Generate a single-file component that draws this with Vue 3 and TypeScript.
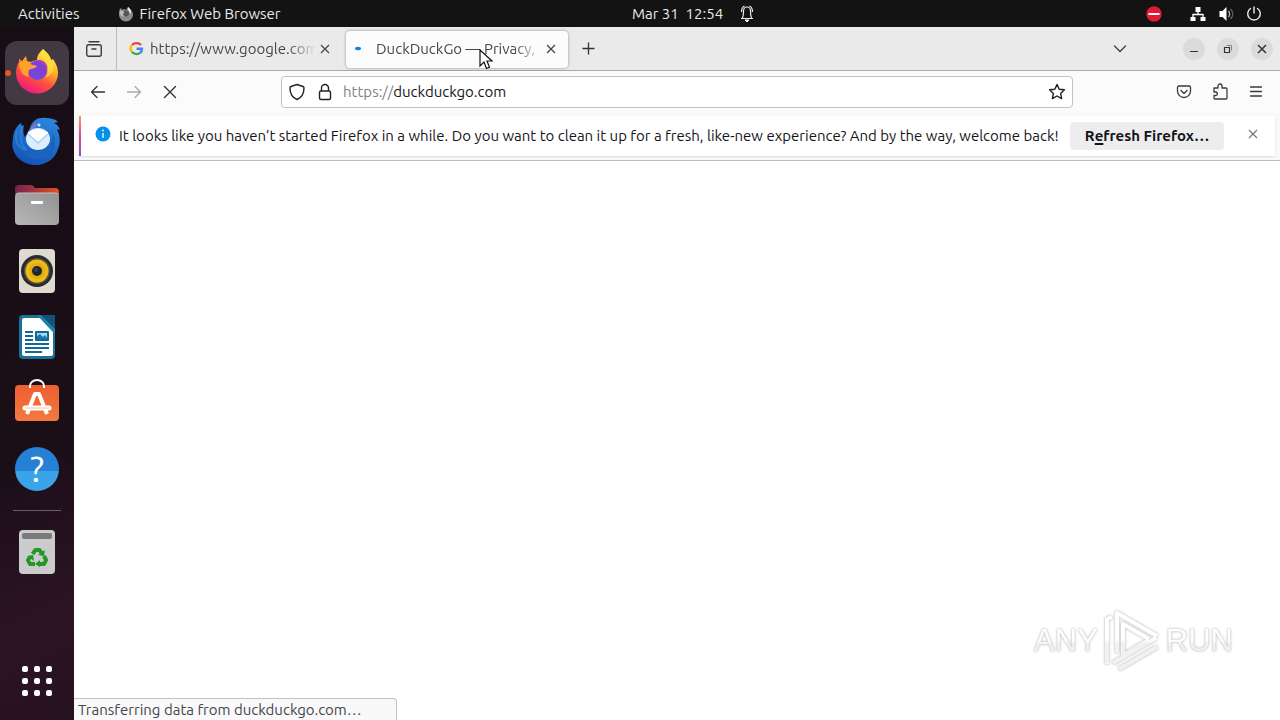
<script setup lang="ts">
import { ref } from 'vue'

interface Tab {
  id: number
  title: string
  loading: boolean
}

const tabs: Tab[] = [
  { id: 1, title: 'https://www.google.com', loading: false },
  { id: 2, title: 'DuckDuckGo — Privacy,', loading: true },
]
const activeTab = ref(2)
const address = ref('https://duckduckgo.com')
</script>

<template>
  <div class="desktop">
    <header class="topbar">
      <div class="top-left">
        <button class="top-btn">Activities</button>
        <button class="top-btn app-menu">
          <svg width="16" height="16" viewBox="0 0 16 16" aria-hidden="true">
            <path d="M1 4l2-2 1 2 2-1 2 1 2-3c1 1 2 2 3 3 1 1 2 3 2 5a7 6.500 0 0 1-14 0c0-2 0-3 1-5z" fill="#8c8c8c" />
            <circle cx="8" cy="7.500" r="3" fill="#555" />
            <path d="M10 1c-1 3 2 4 2 7 2-2 1-5-2-7z" fill="#eee" />
            <path d="M1.500 5c2-1 3 0 5 1.500-2 .5-2 3 0 4-3 .5-5-2-5-5.500z" fill="#bbb" />
          </svg>
          <span>Firefox Web Browser</span>
        </button>
      </div>
      <button class="top-btn clock">
        <span>Mar 31&nbsp; 12:54</span>
        <svg width="16" height="18" viewBox="0 0 16 18" fill="none" stroke="#eee" aria-hidden="true">
          <path d="M2 13.500h12M3.500 13c1-2 1-4 1-7a3.500 4 0 0 1 7 0c0 3 0 5 1 7M2.500 7c0-3 1-5 3-6M13.500 7c0-3-1-5-3-6" stroke-width="1.200" />
          <path d="M6 15h4l-2 2z" fill="#eee" />
        </svg>
      </button>
      <div class="tray">
        <svg width="16" height="16" viewBox="0 0 16 16" aria-hidden="true">
          <circle cx="8" cy="8" r="7.700" fill="#e01b36" /><path d="M2.500 8h11" stroke="#fff" stroke-width="2" />
        </svg>
        <button class="tray-menu" aria-label="System menu">
          <svg width="16" height="16" viewBox="0 0 16 16" aria-hidden="true">
            <path d="M8 4v4M3 12V8.500h10V12" fill="none" stroke="#fff" stroke-width="1.300" />
            <path d="M5.500 1h5v5h-5zM.5 11h5v4h-5zM10.500 11h5v4h-5z" fill="#fff" />
          </svg>
          <svg width="16" height="16" viewBox="0 0 16 16" aria-hidden="true">
            <path d="M1.500 5h3l4-4v14l-4-4h-3z" fill="#fff" />
            <path d="M10.500 5c1.500 2 1.500 4 0 6" fill="none" stroke="#bbb" stroke-width="1.300" />
            <path d="M12.500 3c3 3 3 7 0 10" fill="none" stroke="#666" stroke-width="1.300" />
          </svg>
          <svg width="16" height="16" viewBox="0 0 16 16" fill="none" stroke="#eee" stroke-width="1.400" stroke-linecap="round" aria-hidden="true">
            <path d="M8 1v6M4.500 2.500a6.300 6.300 0 1 0 7 0" />
          </svg>
        </button>
      </div>
    </header>

    <div class="workspace">
      <nav class="dock" aria-label="Dock">
        <button class="dock-item running" aria-label="Firefox">
          <svg width="48" height="48" viewBox="0 0 48 48" aria-hidden="true">
            <defs>
              <linearGradient id="fx" x1=".8" y1=".05" x2=".3" y2="1">
                <stop offset="0" stop-color="#fff04a" /><stop offset=".35" stop-color="#ffb02a" />
                <stop offset=".65" stop-color="#ff4f3e" /><stop offset="1" stop-color="#ee1584" />
              </linearGradient>
              <linearGradient id="fxglobe" x1="1" y1="0" x2="0" y2="1"><stop offset="0" stop-color="#8a3ad0" /><stop offset="1" stop-color="#6c4be0" /></linearGradient>
            </defs>
            <path d="M30 0c3 3 7 5 8 11l2-1c3 4 5 9 5 14a21 20.500 0 0 1-42 0c0-4 1-8 3-11l0-3 3 2 4-5 1 5 4 1c2-1 4-2 6-2 0-5 3-8 6-11z" fill="url(#fx)" />
            <path d="M15 22c0-6 4-11 11-11 5 0 8 4 8 10a9.500 9.500 0 0 1-19 1z" fill="url(#fxglobe)" />
            <path d="M22 12c7-2 12 1 13 7-2-2-3-3-5-3-2-3-5-4-8-4z" fill="#b03fb4" opacity=".8" />
            <path d="M6 14c4-3 9-2 11 1 2 1 5 1 7 2-1 3-6 2-8 4-1 2-1 5 0 7-6-1-10-6-10-14z" fill="#ffa12c" />
            <path d="M30 0c-4 7 0 10 3 14 3 5 3 10-1 15 9-4 11-12 6-18-1-4-4-7-8-11z" fill="#ffe040" opacity=".75" />
          </svg>
        </button>
        <button class="dock-item" aria-label="Thunderbird">
          <svg width="52" height="52" viewBox="0 0 52 52" aria-hidden="true">
            <defs><linearGradient id="tb" x1=".7" y1="0" x2=".4" y2="1"><stop offset="0" stop-color="#2a85dd" /><stop offset="1" stop-color="#1454b7" /></linearGradient></defs>
            <path d="M19 15c2-8 9-11 16-10 5 0 9 1 12 4l-4 1c4 2 5 4 6 7l-3-1c3 7 4 13 1 20a23 21 0 0 1-45-10c0-6 3-13 8-16l1 3 2-1c-1 5-1 9 1 12z" fill="url(#tb)" />
            <path d="M11 13c-2 11-3 18 5 24-9-2-13-9-10-19" fill="none" stroke="#3388d8" stroke-width="2" opacity=".7" />
            <path d="M18 19c2-8 8-10 11-9-5 3-6 6-8 11z" fill="#7e70cd" />
            <ellipse cx="27" cy="26" rx="12" ry="11" fill="#dceefe" />
            <path d="M17 21l10 9 10-9v-2l-10-3-10 3z" fill="#fff" />
            <path d="M17 21l10 9 10-9" fill="none" stroke="#a9d1ef" stroke-width="1.500" />
            <circle cx="28" cy="12" r="1.500" fill="#bcecff" />
            <path d="M28 37c10 0 15-8 13-18 7 12 1 26-14 27-7 0-12-3-16-7 5 2 11 2 17-2z" fill="#1d62bd" />
          </svg>
        </button>
        <button class="dock-item" aria-label="Files">
          <svg width="48" height="48" viewBox="0 0 48 48" aria-hidden="true">
            <defs>
              <linearGradient id="folder" x1="0" y1="0" x2="1" y2="0"><stop offset="0" stop-color="#75214d" /><stop offset="1" stop-color="#e45023" /></linearGradient>
              <linearGradient id="folder-front" x1="1" y1="0" x2="0" y2="1"><stop offset="0" stop-color="#929292" /><stop offset="1" stop-color="#b8b8b8" /></linearGradient>
            </defs>
            <path d="M2 8q0-4 4-4h12q2 0 4 3h20q4 0 4 4v15H2z" fill="url(#folder)" />
            <rect x="2" y="12" width="44" height="32" rx="4" fill="url(#folder-front)" />
            <path d="M3 13q1-1 3-1h36q2 0 3 1" fill="none" stroke="#c2c2c2" />
            <rect x="18" y="20" width="12" height="3" rx="1" fill="#fff" />
          </svg>
        </button>
        <button class="dock-item" aria-label="Rhythmbox">
          <svg width="48" height="48" viewBox="0 0 48 48" aria-hidden="true">
            <rect x="6" y="2" width="36" height="44" rx="4" fill="#dfdad0" />
            <circle cx="24" cy="24" r="16" fill="#292b2d" /><circle cx="24" cy="24" r="13" fill="#54524a" />
            <circle cx="24" cy="24" r="11.500" fill="#f0bb13" /><circle cx="24" cy="24" r="8" fill="#e3ad12" />
            <circle cx="24" cy="24" r="5" fill="#1f252b" /><circle cx="23" cy="23" r="2" fill="#36404b" />
          </svg>
        </button>
        <button class="dock-item" aria-label="LibreOffice Writer">
          <svg width="48" height="48" viewBox="0 0 48 48" aria-hidden="true">
            <path d="M6 6q0-4 4-4h18l14 14v26q0 4-4 4H10q-4 0-4-4z" fill="#1b7099" />
            <path d="M9 7q0-2 2-2h16l13 14v22q0 2-2 2H11q-2 0-2-2z" fill="#fff" />
            <path d="M28 2h14v14z" fill="#115378" /><path d="M28 2l14 14v5L24 2z" fill="#1e82ad" />
            <path d="M12 19h8M12 23h8M12 27h8M12 31h24M12 35h24M12 39h17" stroke="#116994" stroke-width="2" />
            <rect x="22" y="18" width="14" height="10" rx="1" fill="#116994" /><path d="M24 20h10v6H24z" fill="#a8ddf7" />
            <path d="M24 26v-3l3-2 3 3 2-2 2 3v1z" fill="#1679aa" />
          </svg>
        </button>
        <button class="dock-item" aria-label="Ubuntu Software">
          <svg width="48" height="48" viewBox="0 0 48 48" aria-hidden="true">
            <defs><linearGradient id="store" x1="0" y1="0" x2="0" y2="1"><stop offset="0" stop-color="#ee5f32" /><stop offset="1" stop-color="#f17941" /></linearGradient></defs>
            <rect x="2" y="6" width="44" height="36" rx="4" fill="url(#store)" />
            <path d="M17 9V7a7 6 0 0 1 14 0v2" fill="none" stroke="#fff" stroke-width="2" />
            <path d="M14 35l8-20h4l8 20" fill="none" stroke="#fff" stroke-width="4" stroke-linejoin="round" />
            <path d="M12 29h24" stroke="#fff" stroke-width="5" stroke-linecap="round" />
            <path d="M12 29h24" stroke="#f6c2ac" />
          </svg>
        </button>
        <button class="dock-item" aria-label="Help">
          <span class="help">?</span>
        </button>
        <hr class="dock-rule">
        <button class="dock-item" aria-label="Trash">
          <svg width="48" height="48" viewBox="0 0 48 48" aria-hidden="true">
            <rect x="6" y="2" width="36" height="44" rx="4" fill="#cbcbcb" /><rect x="9" y="5" width="30" height="6" rx="2" fill="#7b7b7b" />
            <g fill="none" stroke="#249629" stroke-width="4" stroke-linejoin="round">
              <path d="M19.500 26l3-4h4l2 3M31 28l2 4-2 4h-5M22 36h-5l-2-4 2-3" />
            </g>
            <path d="M25 27l6 1 1-6zM27 32v7l-5-3zM14 28l6-1 1 6z" fill="#249629" />
          </svg>
        </button>
        <button class="dock-item apps" aria-label="Show Applications">
          <svg width="32" height="32" viewBox="0 0 32 32" fill="#fff" aria-hidden="true">
            <template v-for="r in 3" :key="r">
              <rect v-for="c in 3" :key="c" :x="c * 12 - 11" :y="r * 12 - 11" width="6" height="6" rx="2" />
            </template>
          </svg>
        </button>
      </nav>

      <main class="window">
        <div class="tabstrip">
          <button class="view-btn" aria-label="Firefox View">
            <svg width="18" height="18" viewBox="0 0 18 18" fill="none" stroke="#3b3b40" stroke-width="1.400" stroke-linecap="round" aria-hidden="true">
              <rect x="1.700" y="4.700" width="14.600" height="11.600" rx="2" /><path d="M4 1.700h10M7 9h4" />
            </svg>
          </button>
          <div class="tabs">
            <div v-for="t in tabs" :key="t.id" class="tab" :class="{ active: t.id === activeTab }">
              <button class="tab-main" @click="activeTab = t.id">
                <svg v-if="t.loading" width="16" height="16" viewBox="0 0 16 16" aria-hidden="true"><ellipse cx="4" cy="7.500" rx="3" ry="1.800" fill="#0a84e0" /></svg>
                <svg v-else width="16" height="16" viewBox="0 0 16 16" fill="none" stroke-width="2.400" aria-hidden="true">
                  <path d="M13 4A6 5.500 0 0 0 4 4" stroke="#e94235" /><path d="M4 4a5.500 5.500 0 0 0 0 7" stroke="#fbbc05" />
                  <path d="M4 11a6 5.500 0 0 0 8 1" stroke="#34a853" /><path d="M12 12a5 5 0 0 0 2-4.300H8.500" stroke="#4285f4" />
                </svg>
                <span class="tab-title">{{ t.title }}</span>
              </button>
              <button class="tab-close" :aria-label="'Close ' + t.title">
                <svg width="10" height="10" viewBox="0 0 10 10" aria-hidden="true"><path d="M1 1l8 8M9 1L1 9" stroke="#444" stroke-width="1.200" /></svg>
              </button>
            </div>
          </div>
          <button class="new-tab" aria-label="New tab">
            <svg width="13" height="13" viewBox="0 0 13 13" aria-hidden="true"><path d="M6.500 .5v12M.5 6.500h12" stroke="#333" stroke-width="1.300" /></svg>
          </button>
          <button class="list-tabs" aria-label="List all tabs">
            <svg width="14" height="8" viewBox="0 0 14 8" fill="none" stroke="#444" stroke-width="1.400" stroke-linecap="round" stroke-linejoin="round" aria-hidden="true"><path d="M1.500 1L7 6.500 12.500 1" /></svg>
          </button>
          <div class="win-controls">
            <button aria-label="Minimize"><svg width="10" height="10" viewBox="0 0 10 10" aria-hidden="true"><path d="M1 7.500h8" stroke="#333" /></svg></button>
            <button aria-label="Restore"><svg width="10" height="10" viewBox="0 0 10 10" fill="none" stroke="#333" aria-hidden="true"><path d="M1.500 3.500h5v5h-5z" stroke-width="1.200" /><path d="M3.500 1.500h5v5" stroke="#888" /></svg></button>
            <button aria-label="Close window"><svg width="10" height="10" viewBox="0 0 10 10" aria-hidden="true"><path d="M1 1l8 8M9 1L1 9" stroke="#333" stroke-width="1.500" /></svg></button>
          </div>
        </div>

        <div class="toolbar">
          <div class="nav-btns">
            <button aria-label="Back"><svg width="16" height="16" viewBox="0 0 16 16" fill="none" stroke="#333" stroke-width="1.300" stroke-linecap="round" stroke-linejoin="round" aria-hidden="true"><path d="M14.500 8h-13M7 2.500L1.500 8 7 13.500" /></svg></button>
            <button aria-label="Forward" disabled><svg width="16" height="16" viewBox="0 0 16 16" fill="none" stroke="#aaa" stroke-width="1.300" stroke-linecap="round" stroke-linejoin="round" aria-hidden="true"><path d="M1.500 8h13M9 2.500L14.500 8 9 13.500" /></svg></button>
            <button aria-label="Stop"><svg width="16" height="16" viewBox="0 0 16 16" stroke="#333" stroke-width="1.400" stroke-linecap="round" aria-hidden="true"><path d="M2.500 2.500l11 11M13.500 2.500l-11 11" /></svg></button>
          </div>
          <div class="urlbar">
            <button aria-label="Tracking protection"><svg width="18" height="18" viewBox="0 0 18 18" fill="none" stroke="#222" stroke-width="1.400" stroke-linejoin="round" aria-hidden="true"><path d="M9 1.500l6 2c.8.300 1 .8 1 1.500 0 5-2 9.500-7 11.500C4 14.500 2 10 2 5c0-.7.200-1.200 1-1.500z" /></svg></button>
            <button aria-label="Site information"><svg width="18" height="18" viewBox="0 0 18 18" fill="none" stroke="#222" stroke-width="1.400" aria-hidden="true"><rect x="3.500" y="8" width="11" height="8.500" rx="1.500" /><path d="M5.500 8V5a3.500 3.500 0 0 1 7 0v3" /></svg></button>
            <div class="address">
              <label for="url" class="address-view"><span class="scheme">https://</span>duckduckgo.com</label>
              <input id="url" v-model="address" type="text" aria-label="Search or enter address">
            </div>
            <button aria-label="Bookmark this page"><svg width="18" height="18" viewBox="0 0 18 18" fill="none" stroke="#222" stroke-width="1.400" stroke-linejoin="round" aria-hidden="true"><path d="M9 1.500l2.200 4.700 5.200.6-3.800 3.600 1 5.200L9 13l-4.600 2.600 1-5.200-3.800-3.600 5.200-.6z" /></svg></button>
          </div>
          <div class="tool-btns">
            <button aria-label="Save to Pocket"><svg width="16" height="16" viewBox="0 0 16 16" fill="none" stroke="#3b3b40" stroke-width="1.300" stroke-linecap="round" stroke-linejoin="round" aria-hidden="true"><path d="M3 2h10q1.500 0 1.500 1.500V7a6.500 6.500 0 0 1-13 0V3.500Q1.500 2 3 2zM5 6.500l3 3 3-3" /></svg></button>
            <button aria-label="Extensions"><svg width="16" height="18" viewBox="0 0 16 18" fill="none" stroke="#3b3b40" stroke-width="1.300" stroke-linejoin="round" aria-hidden="true"><path d="M2 5h4V3a2 2 0 0 1 4 0v2h4q1 0 1 1v9q0 1-1 1H3q-1 0-1-1v-2.500h2a1.800 1.800 0 0 0 0-3.500H2z" /></svg></button>
            <button aria-label="Application menu"><svg width="16" height="16" viewBox="0 0 16 16" stroke="#3b3b40" stroke-width="1.300" stroke-linecap="round" aria-hidden="true"><path d="M2.500 3h11M2.500 7.500h11M2.500 12h11" /></svg></button>
          </div>
        </div>

        <div class="notice-wrap">
          <section class="notice" role="alert">
            <svg class="info" width="16" height="16" viewBox="0 0 16 16" aria-hidden="true"><circle cx="8" cy="8" r="7.500" fill="#0390ea" /><path d="M8 7v5" stroke="#e4f4ff" stroke-width="1.500" /><circle cx="8" cy="4.500" r="1" fill="#e4f4ff" /></svg>
            <p>It looks like you haven’t started Firefox in a while. Do you want to clean it up for a fresh, like-new experience? And by the way, welcome back!</p>
            <button class="refresh">R<u>e</u>fresh Firefox…</button>
            <button class="dismiss" aria-label="Dismiss"><svg width="10" height="10" viewBox="0 0 10 10" aria-hidden="true"><path d="M1 1l8 8M9 1L1 9" stroke="#777" stroke-width="1.200" /></svg></button>
          </section>
        </div>

        <div class="page">
          <div class="watermark">
            <span>ANY</span>
            <svg width="60" height="64" viewBox="0 0 60 64" fill="none" stroke-linejoin="round" aria-hidden="true">
              <defs><linearGradient id="mark" gradientUnits="userSpaceOnUse" x1="0" y1="0" x2="0" y2="64"><stop offset=".48" stop-color="#fff" /><stop offset=".54" stop-color="#f1f1f1" /></linearGradient></defs>
              <path d="M15 44V4l40 23M21 48V15l26 15M5 55V10l5-2M11 54l43-25M17 60l38-22M21 46l26-15" stroke="url(#mark)" stroke-width="4" />
            </svg>
            <span>RUN</span>
          </div>
          <div class="status" role="status">Transferring data from duckduckgo.com…</div>
        </div>
      </main>
    </div>

    <svg class="cursor" width="14" height="22" viewBox="0 0 14 22" aria-hidden="true">
      <path d="M1 1v16l4-4 2.500 6.500 3-1.300L8 12h5z" fill="#fff" stroke="#111" stroke-width="1.200" />
    </svg>
  </div>
</template>

<style>
html,
body,
#app {
  height: 100%;
}
</style>

<style scoped>
.desktop {
  position: relative;
  display: flex;
  flex-direction: column;
  height: 100%;
  overflow: hidden;
  font-family: Ubuntu, "Noto Sans", sans-serif;
  font-size: 15px;
  line-height: 20px;
  color: #15141a;
}
.desktop * {
  box-sizing: border-box;
}
button {
  display: flex;
  align-items: center;
  justify-content: center;
  padding: 0;
  border: 0;
  background: none;
  color: inherit;
  font: inherit;
}
svg {
  flex: none;
  display: block;
}
.topbar {
  display: grid;
  grid-template-columns: 1fr auto 1fr;
  align-items: center;
  flex: none;
  height: 27px;
  padding: 0 18px;
  background: #131313;
  color: #e9e9e9;
}
.top-left {
  display: flex;
  gap: 38px;
}
.app-menu {
  gap: 6px;
}
.clock {
  gap: 16px;
  padding-left: 107px;
}
.tray {
  display: flex;
  align-items: center;
  justify-content: flex-end;
  gap: 28px;
}
.tray-menu {
  gap: 12px;
}
.workspace {
  display: flex;
  flex: 1;
  min-height: 0;
}
.dock {
  display: flex;
  flex-direction: column;
  align-items: center;
  flex: none;
  gap: 2px;
  width: 74px;
  padding: 14px 5px 7px;
  background: linear-gradient(155deg, #170d15 0%, #1a0e17 60%, #2c1424 85%, #26111f 100%);
}
.dock-item {
  position: relative;
  flex: none;
  width: 64px;
  height: 64px;
  border-radius: 12px;
}
.running {
  background: #423942;
}
.running::before {
  content: "";
  position: absolute;
  top: 29px;
  left: 0;
  width: 6px;
  height: 6px;
  border-radius: 3px;
  background: #e95420;
}
.help {
  width: 44px;
  height: 44px;
  border-radius: 22px;
  background: linear-gradient(#2680d5 0 54%, #3ba3e7 54% 100%);
  color: #fff;
  font-size: 36px;
  line-height: 44px;
}
.dock-rule {
  width: 48px;
  height: 1px;
  margin: 7px 0;
  border: 0;
  background: #655d64;
}
.apps {
  margin-top: auto;
}
.window {
  display: flex;
  flex-direction: column;
  flex: 1;
  min-width: 0;
  background: #fff;
}
.tabstrip {
  display: flex;
  align-items: center;
  flex: none;
  height: 44px;
  border-bottom: 1px solid #a9a9ad;
  background: #eaeaea;
}
.view-btn {
  align-self: stretch;
  width: 43px;
  padding-right: 2px;
  border-right: 1px solid #bcbcbf;
}
.tabs {
  display: flex;
  gap: 4px;
  padding: 1px 0 0 3px;
}
.tab {
  display: flex;
  align-items: center;
  width: 222px;
  height: 37px;
  padding: 0 8px;
  border-radius: 4px;
  color: #45454b;
}
.tab.active {
  background: #fcfcfc;
  box-shadow: 0 0 3px rgba(0, 0, 0, 0.4);
}
.tab-main {
  flex: 1;
  justify-content: flex-start;
  gap: 6px;
  min-width: 0;
}
.tab-title {
  flex: 1;
  overflow: hidden;
  text-align: left;
  white-space: nowrap;
  mask-image: linear-gradient(to left, transparent, #000 28px);
}
.tab-close {
  width: 18px;
  height: 20px;
}
.new-tab {
  width: 40px;
  height: 32px;
}
.list-tabs {
  width: 32px;
  height: 32px;
  margin-left: auto;
}
.win-controls {
  display: flex;
  gap: 12px;
  padding: 0 7px 0 47px;
}
.win-controls button {
  width: 22px;
  height: 22px;
  border-radius: 11px;
  background: #dbdbdb;
}
.toolbar {
  display: grid;
  grid-template-columns: 207px minmax(0, 1fr) 207px;
  flex: none;
  height: 42px;
  align-items: center;
  background: #fbfbfb;
}
.nav-btns {
  display: flex;
  padding-left: 6px;
}
.nav-btns button,
.tool-btns button {
  width: 36px;
  height: 32px;
}
.tool-btns {
  display: flex;
  justify-content: flex-end;
  padding-right: 6px;
}
.urlbar {
  display: flex;
  align-items: center;
  height: 32px;
  padding: 0 1px;
  border: 1px solid #c2c2c5;
  border-radius: 4px;
  background: #fff;
}
.urlbar button {
  width: 28px;
  height: 30px;
}
.address {
  display: grid;
  flex: 1;
  padding-left: 4px;
}
.address-view,
.address input {
  grid-area: 1 / 1;
}
.scheme {
  color: #818187;
}
.address input {
  width: 100%;
  padding: 0;
  border: 0;
  outline: 0;
  background: none;
  color: transparent;
  font: inherit;
}
.notice-wrap {
  flex: none;
  padding: 3px 5px 4px;
  border-bottom: 1px solid #bdbdc0;
  background: #f9f9fa;
}
.notice {
  display: flex;
  align-items: center;
  min-height: 40px;
  padding: 0 12px 0 14px;
  border-left: 2px solid;
  border-image: linear-gradient(#ff9b5b, #e0479b, #8053cf) 1;
  background: #fff;
  box-shadow: 0 1px 2px rgba(0, 0, 0, 0.12);
}
.info {
  margin: 0 8px 4px 0;
}
.notice p {
  flex: 1;
  margin: 0;
  white-space: nowrap;
}
.refresh {
  width: 154px;
  height: 28px;
  border-radius: 4px;
  background: #ededee;
  font-weight: 700;
  white-space: pre;
}
.refresh u {
  text-decoration-thickness: 2px;
  text-underline-offset: 2px;
}
.dismiss {
  width: 20px;
  height: 28px;
  margin: 0 0 4px 19px;
}
.page {
  position: relative;
  flex: 1;
}
.status {
  position: absolute;
  bottom: 0;
  left: 0;
  width: 323px;
  height: 22px;
  padding: 0 4px;
  border: 1px solid #c2c2c5;
  border-width: 1px 1px 0 0;
  border-radius: 0 4px 0 0;
  background: #f9f9fa;
  color: #45454b;
  line-height: 22px;
}
.watermark {
  position: absolute;
  right: 47px;
  bottom: 47px;
  display: flex;
  align-items: center;
  gap: 4px;
  background: linear-gradient(#fff 50%, #f1f1f1 54%) text;
  color: transparent;
  font-family: "Liberation Sans Narrow", "Liberation Sans", sans-serif;
  font-size: 31px;
  line-height: 64px;
  filter: drop-shadow(0 0 1px #c4c4c4) drop-shadow(0 0 1px #dedede);
}
.cursor {
  position: absolute;
  top: 49px;
  left: 479px;
  pointer-events: none;
}
</style>
